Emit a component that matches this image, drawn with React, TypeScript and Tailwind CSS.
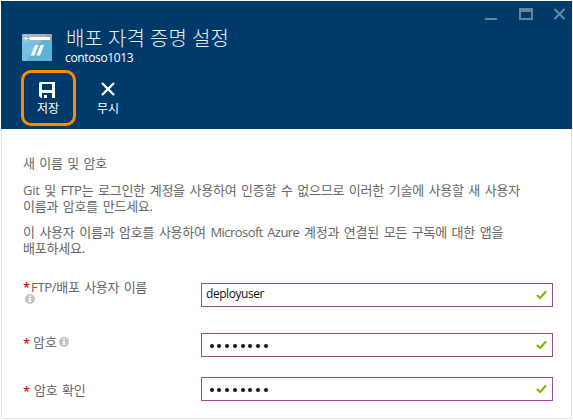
import React from 'react';

function SiteIcon() {
  return (
    <svg width="30" height="27" viewBox="0 0 30 27" className="mt-[33px] shrink-0">
      <rect width="30" height="27" rx="1" fill="#59b4d9" />
      <path d="M1 0h28a1 1 0 0 1 1 1v6H0V1a1 1 0 0 1 1-1z" fill="#a0a1a2" />
      <path d="M0 1a1 1 0 0 1 1-1h24L4 27H1a1 1 0 0 1-1-1z" fill="#fff" opacity=".18" />
      <rect x="8" y="3" width="20" height="3" fill="#fff" />
      <circle cx="4.5" cy="4.5" r="3.2" fill="#59b4d9" stroke="#d5e9f2" strokeWidth=".5" />
      <path d="M7 4.5H3M4.8 2.6 2.8 4.5l2 1.9" stroke="#fff" strokeWidth="1.1" fill="none" />
      <path d="M13 11h3.6l-4.2 10.5H8.8zM18.6 11h3.6L18 21.500h-3.6z" fill="#fff" />
    </svg>
  );
}

function Info({ className }: { className: string }) {
  return (
    <svg width="10" height="10" viewBox="0 0 9 9" className={className}>
      <circle cx="4.5" cy="4.5" r="4.5" fill="#c4c4c4" />
      <path d="M3.7 1.4h1.6v1.3H3.7zM3.2 3.5h2.1v3h.5v.8H3.2v-.8h.5V4.3h-.5z" fill="#fff" />
    </svg>
  );
}

function Field({ children, password }: { children?: React.ReactNode; password?: boolean }) {
  return (
    <div className="flex h-6 w-[352px] shrink-0 items-center justify-between border border-[#9b4f96] bg-white pr-[5px] pl-1 text-[12px] text-[#111]">
      {password ? (
        <span className="flex gap-[3.8px] pt-[2px] pl-[3.5px]">
          {Array.from({ length: 8 }, (_, i) => (
            <span key={i} className="size-1 rounded-full bg-[#111]" />
          ))}
        </span>
      ) : (
        <span className="-mt-[2px] tracking-[-0.45px]">{children}</span>
      )}
      <svg width="11" height="10" viewBox="0 0 11 10">
        <path d="M.9 4.9 4.1 8 10.1 1.3" fill="none" stroke="#7fba00" strokeWidth="2.1" />
      </svg>
    </div>
  );
}

export default function App() {
  return (
    <div className="h-[420px] w-[573px] bg-white pt-px pl-px font-['Open_Sans','Noto_Sans_CJK_KR',sans-serif] whitespace-nowrap">
      <div className="flex h-[418px] w-[571px] flex-col border-r border-b border-l border-[#e5e5e5]">
        <header className="-mr-px -ml-px h-32 shrink-0 bg-[#003a6b] text-white">
          <div className="flex h-[69px]">
            <div className="w-[21px] shrink-0" />
            <SiteIcon />
            <div className="ml-[13px] flex-1 pt-[26px]">
              <h1 className="h-[23px] pl-px text-[20px] leading-[23px] font-light text-[#e8eef3]">배포 자격 증명 설정</h1>
              <p className="h-4 text-[12px] leading-4 tracking-[-0.35px]">contoso1013</p>
            </div>
            <svg width="82" height="14" viewBox="0 0 82 14" className="mt-[6px] mr-[5px] shrink-0">
              <path d="M0 12h12" stroke="#6484a0" strokeWidth="2" />
              <path d="M34 1h14v12H34zM36 5v6h10V5z" fill="#6484a0" fillRule="evenodd" />
              <path d="m69.500 2 10 10M79.500 2l-10 10" stroke="#6484a0" strokeWidth="2.2" />
            </svg>
          </div>
          <div className="flex pl-5 text-[12px] leading-4">
            <button className="flex h-14 w-[55px] flex-col items-center rounded-[10px] border-[3px] border-[#ff8c00] pt-[9px]">
              <svg width="16" height="16" viewBox="0 0 16 16" className="-ml-[3px] shrink-0">
                <path d="M1 0h15v16h-3v-5H3v5H2l-2-2V1zM3 2v6h10V2z" fill="#fff" fillRule="evenodd" />
                <path d="M5 13h3v3H5z" fill="#fff" />
              </svg>
              <span className="mt-[3px] -ml-px">저장</span>
            </button>
            <button className="ml-[11px] flex h-14 w-[42px] flex-col items-center pt-[12px]">
              <svg width="14" height="14" viewBox="0 0 14 14" className="shrink-0">
                <path d="m1 1 12 12M13 1 1 13" stroke="#fff" strokeWidth="2.4" />
              </svg>
              <span className="mt-[5px]">무시</span>
            </button>
          </div>
        </header>
        <main className="pl-[21px] text-[13px] leading-4 text-[#666]">
          <p className="mt-[26px] tracking-[-0.15px] [word-spacing:1.2px]">새 이름 및 암호</p>
          <div className="mt-[11px] tracking-[-0.23px] [word-spacing:1.5px]">
            <p>Git 및 FTP는 로그인한 계정을 사용하여 인증할 수 없으므로 이러한 기술에 사용할 새 사용자</p>
            <p>이름과 암호를 만드세요.</p>
          </div>
          <div className="mt-[10px] tracking-[-0.23px] [word-spacing:1.5px]">
            <p>이 사용자 이름과 암호를 사용하여 <span className="tracking-[-0.55px]">Microsoft Azure</span> 계정과 연결된 모든 구독에 대한 앱을</p>
            <p>배포하세요.</p>
          </div>
          <div className="mt-[27px] flex h-[50px] items-start">
            <div className="-mt-[4px] flex w-[178px] shrink-0">
              <span className="w-2 font-semibold text-[#e81123]">*</span>
              <div>
                <div className="tracking-[-0.3px] [word-spacing:1.5px]">FTP/배포 사용자 이름</div>
                <Info className="-mt-px -ml-[6px]" />
              </div>
            </div>
            <Field>deployuser</Field>
          </div>
          <div className="flex h-[44px] items-start">
            <div className="flex w-[178px] shrink-0 pt-px">
              <span className="w-[10px] pt-px font-semibold text-[#e81123]">*</span>
              <span>암호</span>
              <Info className="mt-[3px] ml-[2px]" />
            </div>
            <Field password />
          </div>
          <div className="flex items-start">
            <div className="flex w-[178px] shrink-0 pt-[5px]">
              <span className="w-[11px] pt-px font-semibold text-[#e81123]">*</span>
              <span className="tracking-[-0.2px] [word-spacing:1.2px]">암호 확인</span>
            </div>
            <Field password />
          </div>
        </main>
      </div>
    </div>
  );
}
